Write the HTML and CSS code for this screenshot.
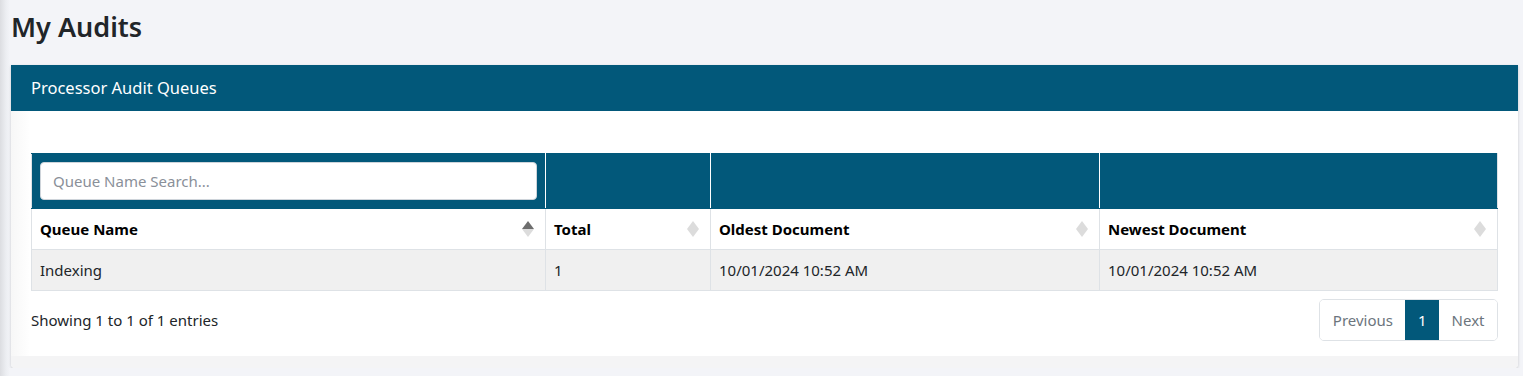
FILE: index.html
```html
<!DOCTYPE html>
<html lang="en">
<head>
    <meta charset="UTF-8">
    <meta name="viewport" content="width=device-width, initial-scale=1.0">
    <title>My Audits</title>
    <link rel="stylesheet" href="styles.css">
</head>
<body>
    <h1 class="page-title">My Audits</h1>

    <div class="card">
        <div class="card-header">Processor Audit Queues</div>
        <div class="card-body">
            <table class="queue-table">
                <colgroup>
                    <col class="col-name">
                    <col class="col-total">
                    <col class="col-oldest">
                    <col class="col-newest">
                </colgroup>
                <thead>
                    <tr class="filter-row">
                        <th><input class="search-input" type="text" placeholder="Queue Name Search..."></th>
                        <th></th>
                        <th></th>
                        <th></th>
                    </tr>
                    <tr class="head-row">
                        <th class="sorted">Queue Name</th>
                        <th>Total</th>
                        <th>Oldest Document</th>
                        <th>Newest Document</th>
                    </tr>
                </thead>
                <tbody>
                    <tr>
                        <td>Indexing</td>
                        <td>1</td>
                        <td>10/01/2024 10:52 AM</td>
                        <td>10/01/2024 10:52 AM</td>
                    </tr>
                </tbody>
            </table>

            <div class="table-footer">
                <div class="table-info">Showing 1 to 1 of 1 entries</div>
                <div class="pagination">
                    <span class="page-link">Previous</span>
                    <span class="page-link active">1</span>
                    <span class="page-link">Next</span>
                </div>
            </div>
        </div>
        <div class="card-footer"></div>
    </div>
</body>
</html>
```

FILE: styles.css
```css
body {
    margin: 0;
    padding: 0 5px 0 11px;
    background-color: #f3f4f8;
    background-image: linear-gradient(to right, #dcdde1 0px, #eceef2 6px, #f3f4f8 10px);
    font-family: 'Noto Sans', 'Open Sans', sans-serif;
    color: #212529;
}

.page-title {
    margin: 0;
    padding-top: 8px;
    height: 65px;
    box-sizing: border-box;
    font-size: 27px;
    font-weight: 600;
    line-height: 38px;
    color: #212529;
}

.card {
    background-color: #ffffff;
    border-radius: 0 0 4px 4px;
    box-shadow: 0 1px 3px rgba(0, 0, 0, 0.18);
    overflow: hidden;
}

.card-header {
    background-color: #02587a;
    color: #ffffff;
    height: 46px;
    line-height: 46px;
    padding: 0 20px;
    font-size: 16.5px;
}

.card-body {
    padding: 42px 20px 15px 20px;
    background-image: linear-gradient(to right, #f7f7f7 0px, #ffffff 19px);
    background-size: 20px 100%;
    background-repeat: no-repeat;
}

.card-footer {
    height: 12px;
    background-color: #f4f4f5;
}

.queue-table {
    width: 100%;
    table-layout: fixed;
    border-collapse: collapse;
    font-size: 15px;
}

.col-name { width: 514px; }
.col-total { width: 165px; }
.col-oldest { width: 389px; }

.queue-table th,
.queue-table td {
    border: 1px solid #dee2e6;
    padding: 0 8px;
    text-align: left;
}

.filter-row th {
    background-color: #02587a;
    height: 54px;
    border-color: #02587a #ffffff #02587a #ffffff;
}

.filter-row th:first-child {
    border-left-color: #dee2e6;
}

.filter-row th:last-child {
    border-right-color: #dee2e6;
}

.search-input {
    display: block;
    width: 100%;
    box-sizing: border-box;
    height: 38px;
    border: 1px solid #ced4da;
    border-radius: 4px;
    padding: 0 12px;
    font-family: inherit;
    font-size: 15px;
    color: #495057;
    background-color: #ffffff;
}

.search-input::placeholder {
    color: #8a9099;
}

.head-row th {
    height: 40px;
    font-weight: 700;
    color: #000000;
    position: relative;
    padding-right: 24px;
}

.head-row th::before,
.head-row th::after {
    content: '';
    position: absolute;
    right: 11px;
    border-left: 6px solid transparent;
    border-right: 6px solid transparent;
}

.head-row th::before {
    top: 12px;
    border-bottom: 8px solid #dcdcdc;
}

.head-row th::after {
    top: 20px;
    border-top: 8px solid #dcdcdc;
}

.head-row th.sorted::before {
    border-bottom-color: #6e6e6e;
}

.queue-table tbody td {
    height: 40px;
    background-color: #f0f0f0;
}

.table-footer {
    display: flex;
    justify-content: space-between;
    align-items: center;
    margin-top: 8px;
}

.table-info {
    font-size: 15px;
    color: #212529;
}

.pagination {
    display: flex;
    border: 1px solid #dee2e6;
    border-radius: 5px;
    overflow: hidden;
}

.page-link {
    height: 40px;
    line-height: 40px;
    padding: 0 12.5px;
    font-size: 15px;
    color: #6c757d;
    background-color: #ffffff;
}

.page-link.active {
    background-color: #02587a;
    color: #ffffff;
}
```
